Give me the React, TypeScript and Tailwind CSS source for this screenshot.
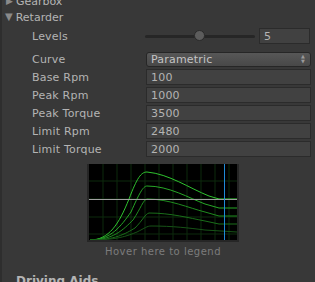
import React from 'react';

const font = { fontFamily: '"DejaVu Sans", "Liberation Sans", sans-serif' };

function Field({ label, value }: { label: string; value: string }) {
  return (
    <div className="flex h-[18px] items-center">
      <div className="w-[114px] pl-[30px] box-content text-[#b4b4b4] tracking-[0.2px]">{label}</div>
      <div className="flex h-[16px] w-[165px] items-center border border-[#2b2b2b] bg-[#414141] pl-[4px] text-[#b4b4b4] tracking-[0.2px]">
        {value}
      </div>
    </div>
  );
}

function Chart() {
  const curves = [
    { c: '#2fc42f', d: 'M1 76 C20 76 30 60 40 35 C48 14 52 8 58 8 C80 10 100 24 120 32 L130 35 L148 35' },
    { c: '#27a827', d: 'M1 76 C22 76 32 62 42 48 C50 30 54 22 58 22 C80 22 100 34 116 40 L130 44 L148 44' },
    { c: '#1f8c1f', d: 'M1 76 C24 76 34 66 44 56 C52 44 54 36 58 35 C80 35 100 44 116 48 L130 52 L148 52' },
    { c: '#1a6f1a', d: 'M1 76 C26 76 36 70 46 64 C54 56 56 50 60 49 C82 49 100 54 116 57 L130 60 L148 60' },
    { c: '#175417', d: 'M1 76 C28 76 38 72 48 68 C56 64 58 62 62 62 C84 62 100 64 116 66 L148 68' },
  ];
  return (
    <div className="ml-[85px] mt-[6px] w-[152px] border-l-2 border-r-2 border-b-2 border-[#262626]">
      <svg width="148" height="76" viewBox="0 0 148 76" className="block bg-black">
        {[14, 28, 42, 56, 70, 84, 98, 112, 126, 140].map((x) => (
          <line key={x} x1={x} y1="0" x2={x} y2="76" stroke="#0c2a0c" strokeWidth="1" />
        ))}
        {[17, 35, 53, 70].map((y) => (
          <line key={y} x1="0" y1={y} x2="148" y2={y} stroke="#0c2a0c" strokeWidth="1" />
        ))}
        {curves.map((c, i) => (
          <path key={i} d={c.d} fill="none" stroke={c.c} strokeWidth="1" />
        ))}
        <line x1="0" y1="35.5" x2="148" y2="35.5" stroke="#a0a0a0" strokeWidth="1" />
        <line x1="135.5" y1="0" x2="135.5" y2="76" stroke="#1e8ad6" strokeWidth="1" />
      </svg>
    </div>
  );
}

export default function App() {
  return (
    <div
      className="h-[282px] w-[315px] overflow-hidden border-l-2 border-[#2e2e2e] bg-[#383838] text-[11px] leading-none"
      style={font}
    >
      <div className="-mt-[7px] flex h-[16px] items-center pl-[4px] text-[#b4b4b4]">
        <span className="mr-[3px] text-[9px] text-[#8a8a8a]">▶</span>Gearbox
      </div>
      <div className="flex h-[16px] items-center pl-[3px] text-[#b4b4b4]">
        <span className="mr-[3px] text-[10px] text-[#8a8a8a]">▼</span>Retarder
      </div>
      <div className="mt-[3px] flex h-[16px] items-center">
        <div className="w-[113px] pl-[30px] box-content text-[#b4b4b4] tracking-[0.2px]">Levels</div>
        <div className="relative flex h-[16px] w-[110px] items-center">
          <div className="h-[3px] w-full rounded-full bg-[#262626]" />
          <div className="absolute left-[49px] top-[2px] h-[11px] w-[11px] rounded-full border border-[#2a2a2a] bg-[#5c5c5c]" />
        </div>
        <div className="ml-[4px] flex h-[16px] w-[51px] items-center border border-[#2b2b2b] bg-[#414141] pl-[4px] text-[#b4b4b4]">
          5
        </div>
      </div>
      <div className="mt-[6px] flex h-[18px] items-center">
        <div className="w-[114px] pl-[30px] box-content text-[#b4b4b4] tracking-[0.2px]">Curve</div>
        <div className="flex h-[15px] w-[165px] items-center justify-between rounded-[3px] border border-[#262626] bg-gradient-to-b from-[#575757] to-[#484848] pl-[4px] pr-[5px] text-[#c4c4c4] tracking-[0.2px]">
          <span>Parametric</span>
          <span className="flex flex-col text-[5px] leading-[5px] text-[#9a9a9a]">
            <span>▲</span>
            <span>▼</span>
          </span>
        </div>
      </div>
      <Field label="Base Rpm" value="100" />
      <Field label="Peak Rpm" value="1000" />
      <Field label="Peak Torque" value="3500" />
      <Field label="Limit Rpm" value="2480" />
      <Field label="Limit Torque" value="2000" />
      <Chart />
      <div className="ml-[85px] mt-[5px] w-[152px] text-center text-[10px] tracking-[0.5px] text-[#7c7c7c]">
        Hover here to legend
      </div>
      <div className="mt-[18px] pl-[14px] text-[12px] font-bold text-[#b4b4b4]">Driving Aids</div>
    </div>
  );
}
